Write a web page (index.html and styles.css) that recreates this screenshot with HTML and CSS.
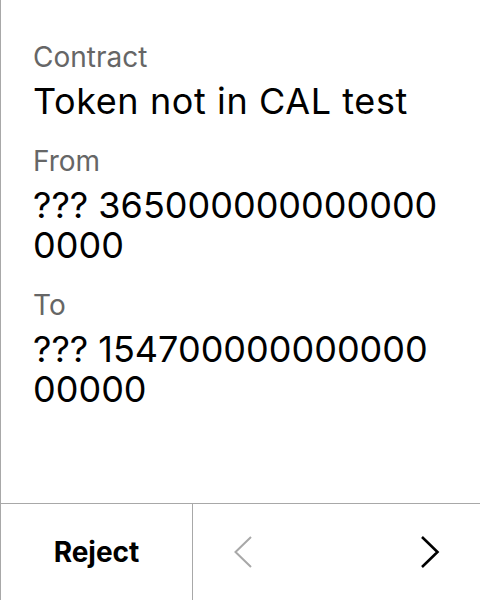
FILE: index.html
```html
<!DOCTYPE html>
<html>
<head>
<meta charset="utf-8">
<link rel="stylesheet" href="styles.css">
</head>
<body>
<div class="screen">
  <div class="content">
    <div class="field">
      <div class="label">Contract</div>
      <div class="value value-title">Token not in CAL test</div>
    </div>
    <div class="field">
      <div class="label">From</div>
      <div class="value">??? 3650000000000000000</div>
    </div>
    <div class="field">
      <div class="label">To</div>
      <div class="value">??? 15470000000000000000</div>
    </div>
  </div>
  <div class="footer">
    <div class="reject">Reject</div>
    <div class="nav">
      <svg class="chev" width="20" height="32" viewBox="0 0 20 32"><path d="M18 1 L2.5 16 L18 31" fill="none" stroke="#a8a8a8" stroke-width="2"/></svg>
      <svg class="chev" width="20" height="32" viewBox="0 0 20 32"><path d="M2 1 L17.5 16 L2 31" fill="none" stroke="#000" stroke-width="2.6"/></svg>
    </div>
  </div>
</div>
</body>
</html>
```
FILE: styles.css
```css
html, body { margin: 0; padding: 0; background: #fff; }
body { font-family: Inter, "Noto Sans", sans-serif; }
.screen {
  width: 480px; height: 600px; box-sizing: border-box;
  border-left: 1px solid #a8a8a8;
  display: flex; flex-direction: column;
}
.content {
  flex: 1; padding: 41px 32px 0 32px;
  display: flex; flex-direction: column; gap: 24px;
}
.label { font-size: 28px; line-height: 32px; color: #666; }
.value { font-size: 36px; line-height: 40px; color: #000; word-break: break-all; margin-top: 8px; }
.value-title { letter-spacing: 0.6px; }
.footer {
  height: 96px; border-top: 1px solid #a8a8a8;
  display: flex;
}
.reject {
  width: 191px; border-right: 1px solid #a8a8a8;
  display: flex; align-items: center; justify-content: center;
  font-size: 28px; font-weight: 700; color: #000;
}
.nav {
  flex: 1; display: flex; align-items: center; justify-content: space-between;
  padding: 0 40px 0 40px;
}
.chev { display: block; }
```
